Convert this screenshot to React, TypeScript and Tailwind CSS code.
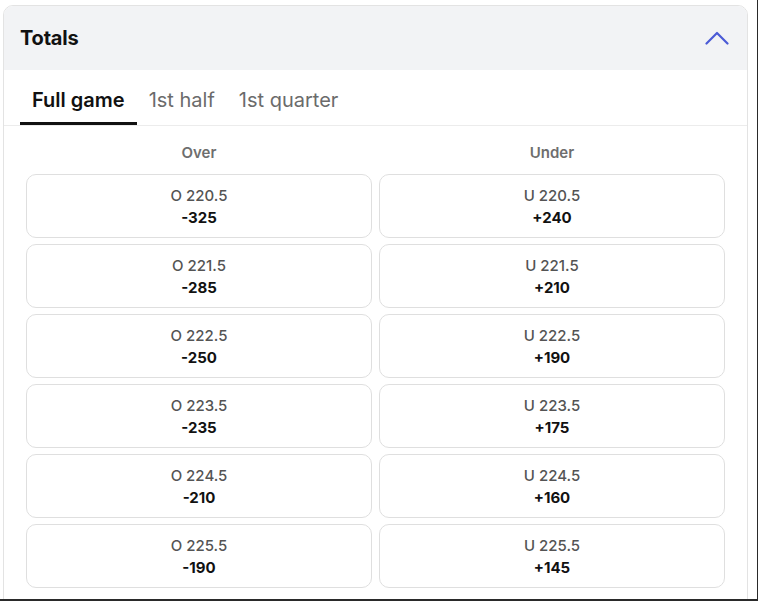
import React, { useState } from 'react';

const lines = [
  { total: '220.5', over: '-325', under: '+240' },
  { total: '221.5', over: '-285', under: '+210' },
  { total: '222.5', over: '-250', under: '+190' },
  { total: '223.5', over: '-235', under: '+175' },
  { total: '224.5', over: '-210', under: '+160' },
  { total: '225.5', over: '-190', under: '+145' },
];

const tabs = ['Full game', '1st half', '1st quarter'];

const OddsButton: React.FC<{ label: string; price: string }> = ({ label, price }) => (
  <button className="h-[64px] rounded-[10px] border border-[#dfdfdf] bg-white flex flex-col items-center justify-center text-[15px] leading-[22px] pt-[2px]">
    <span className="font-medium text-[#545454]">{label}</span>
    <span className="font-bold text-[#111]">{price}</span>
  </button>
);

export default function App() {
  const [active, setActive] = useState(0);

  return (
    <div
      className="w-[758px] h-[601px] overflow-hidden bg-white border-r border-b-2 border-[#2a2a2a] pl-[3px] pt-[5px]"
      style={{ fontFamily: 'Inter, "Liberation Sans", sans-serif' }}
    >
      <div className="w-[745px] h-[700px] rounded-t-[10px] border border-[#e3e3e3] overflow-hidden">
        <div className="h-[64px] bg-[#f2f3f5] flex items-center justify-between pl-4 pr-[18px]">
          <h2 className="text-[20px] font-bold text-[#111] tracking-[-0.2px]">Totals</h2>
          <svg width="24" height="14" viewBox="0 0 24 14" fill="none">
            <polyline points="1.5,12.5 12,2 22.5,12.5" stroke="#4b5bd6" strokeWidth="2.2" strokeLinecap="round" strokeLinejoin="round" />
          </svg>
        </div>

        <div className="h-[56px] border-b border-[#ececec] flex items-end pl-4">
          {tabs.map((t, i) => (
            <button
              key={t}
              onClick={() => setActive(i)}
              className={`h-full px-3 flex items-center text-[20px] border-b-[3px] ${
                i === active ? 'border-[#111] text-[#111] font-semibold' : 'border-transparent text-[#6b6b6b]'
              }`}
            >
              <span className="pt-[7px]">{t}</span>
            </button>
          ))}
        </div>

        <div className="pl-[22px] pr-[22px] pt-[17px]">
          <div className="grid grid-cols-2 gap-x-[7px] mb-[11px]">
            <div className="text-center text-[15px] leading-5 font-semibold text-[#6e6e6e]">Over</div>
            <div className="text-center text-[15px] leading-5 font-semibold text-[#6e6e6e]">Under</div>
          </div>
          <div className="grid grid-cols-2 gap-x-[7px] gap-y-[6px]">
            {lines.map((l) => (
              <React.Fragment key={l.total}>
                <OddsButton label={`O ${l.total}`} price={l.over} />
                <OddsButton label={`U ${l.total}`} price={l.under} />
              </React.Fragment>
            ))}
          </div>
        </div>
      </div>
    </div>
  );
}
